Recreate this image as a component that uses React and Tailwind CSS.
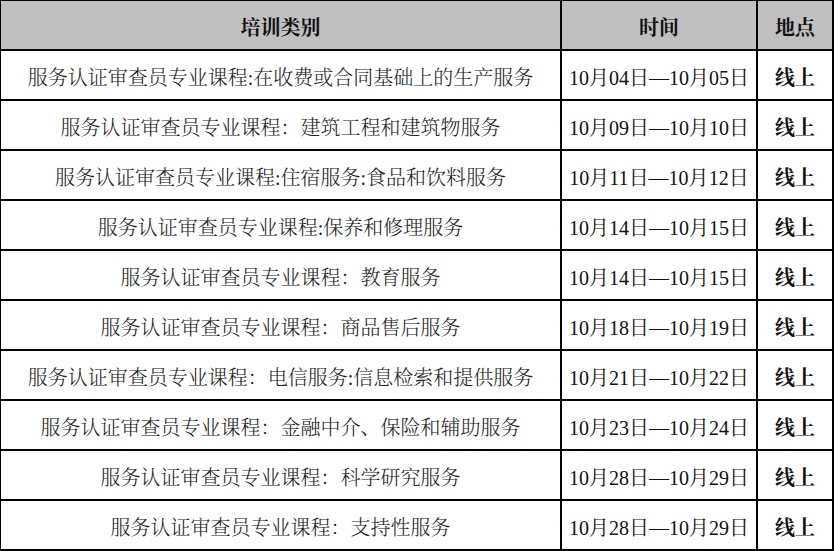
import React from "react";

const rows = [
  ["服务认证审查员专业课程:在收费或合同基础上的生产服务", "04", "05"],
  ["服务认证审查员专业课程：建筑工程和建筑物服务", "09", "10"],
  ["服务认证审查员专业课程:住宿服务:食品和饮料服务", "11", "12"],
  ["服务认证审查员专业课程:保养和修理服务", "14", "15"],
  ["服务认证审查员专业课程：教育服务", "14", "15"],
  ["服务认证审查员专业课程：商品售后服务", "18", "19"],
  ["服务认证审查员专业课程：电信服务:信息检索和提供服务", "21", "22"],
  ["服务认证审查员专业课程：金融中介、保险和辅助服务", "23", "24"],
  ["服务认证审查员专业课程：科学研究服务", "28", "29"],
  ["服务认证审查员专业课程：支持性服务", "28", "29"],
];

const cjk = { fontFamily: '"Liberation Serif", "Noto Serif CJK SC", "Noto Sans CJK SC", serif' };

export default function App() {
  const cell = "h-[50px] pt-[5px] border-r-2 border-b-2 border-black flex items-center justify-center";
  return (
    <div className="w-[834px] h-[551px] bg-white">
      <div
        className="grid grid-cols-[561px_196px_76px] border-l border-t border-black text-[20px] leading-none text-[#111]"
        style={cjk}
      >
        <div className={`${cell} bg-[#c0c0c0] font-bold`}>培训类别</div>
        <div className={`${cell} bg-[#c0c0c0] font-bold`}>时间</div>
        <div className={`${cell} bg-[#c0c0c0] font-bold`}>地点</div>
        {rows.map(([name, a, b], i) => (
          <React.Fragment key={i}>
            <div className={`${cell} font-light text-[#222]`}>{name}</div>
            <div className={cell}>
              10月{a}日—10月{b}日
            </div>
            <div className={`${cell} font-bold`}>线上</div>
          </React.Fragment>
        ))}
      </div>
    </div>
  );
}
